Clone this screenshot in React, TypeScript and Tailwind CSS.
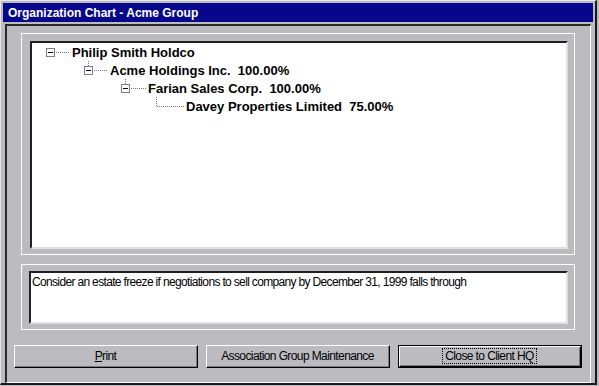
import React from 'react';

const rows = [
  { label: 'Philip Smith Holdco', pct: '', pad: 14, w: 26, box: true, up: false },
  { label: 'Acme Holdings Inc.', pct: '100.00%', pad: 52, w: 26, box: true, up: true },
  { label: 'Farian Sales Corp.', pct: '100.00%', pad: 89, w: 27, box: true, up: true },
  { label: 'Davey Properties Limited', pct: '75.00%', pad: 120, w: 34, box: false, up: true },
];

function Connector({ w, box, up }: { w: number; box: boolean; up: boolean }) {
  return (
    <svg width={w} height={18} className="shrink-0">
      {up && (
        <line x1={4.5} y1={0} x2={4.5} y2={box ? 5 : 10} stroke="#7a7a7a" strokeDasharray="1 1" />
      )}
      {box ? (
        <>
          <rect x={0.5} y={5.5} width={8} height={8} fill="#fff" stroke="#7a7a9a" />
          <line x1={2} y1={9.5} x2={7} y2={9.5} stroke="#000" />
          <line x1={10} y1={9.5} x2={w - 2} y2={9.5} stroke="#7a7a7a" strokeDasharray="1 1" />
        </>
      ) : (
        <line x1={5} y1={9.5} x2={w - 2} y2={9.5} stroke="#7a7a7a" strokeDasharray="1 1" />
      )}
    </svg>
  );
}

function Button({ label, def, u }: { label: string; def?: boolean; u?: boolean }) {
  return (
    <div className={`w-[184px] h-[23px] ${def ? 'border border-black' : ''}`}>
      <div className="w-full h-full border-t border-l border-white border-r border-b border-r-black border-b-black">
        <div className="w-full h-full border-r border-b border-[#7c7c80] flex items-center justify-center text-[12px] tracking-[-0.6px] text-black">
          {def ? (
            <span className="border border-dotted border-black px-[2px] leading-[14px]">{label}</span>
          ) : u ? (
            <span>
              <span className="underline">{label[0]}</span>
              {label.slice(1)}
            </span>
          ) : (
            <span>{label}</span>
          )}
        </div>
      </div>
    </div>
  );
}

export default function App() {
  return (
    <div className="w-[599px] h-[386px] bg-[#bcbcc0] font-['Liberation_Sans',Arial,sans-serif] overflow-hidden">
      <div className="w-[597px] h-[385px] border-t border-l border-[#e6e6e6] border-r-2 border-b-2 border-r-[#1a1a1a] border-b-[#1a1a1a] pt-[2px] px-[2px] flex flex-col">
        {/* Title */}
        <div className="h-[19px] bg-[#07078c] flex items-center pl-[5px] text-white font-bold text-[12px] leading-none">
          Organization Chart - Acme Group
        </div>

        {/* Client area */}
        <div className="mt-[2px] mx-[2px] flex-1 border-t-2 border-l-2 border-t-[#2a2a2a] border-l-[#2a2a2a] border-r border-b border-r-white border-b-white flex flex-col">
          {/* Tree group */}
          <div className="ml-[14px] mt-[7px] w-[554px] h-[222px] border border-white pl-[8px] pt-[7px]">
            <div className="w-[538px] h-[208px] border-t-2 border-l-2 border-t-[#202020] border-l-[#202020] border-r-2 border-b-2 border-r-[#e0e0e0] border-b-[#e0e0e0] bg-white">
              {rows.map((r) => (
                <div key={r.label} className="h-[18px] flex items-center" style={{ paddingLeft: r.pad }}>
                  <Connector w={r.w} box={r.box} up={r.up} />
                  <span className="font-bold text-[13px] text-black whitespace-pre leading-none">
                    {r.label}
                    {r.pct ? `  ${r.pct}` : ''}
                  </span>
                </div>
              ))}
            </div>
          </div>

          {/* Note group */}
          <div className="ml-[14px] mt-[9px] w-[554px] h-[66px] border border-white pl-[7px] pt-[6px]">
            <div className="w-[539px] h-[53px] border-t-2 border-l-2 border-t-[#202020] border-l-[#202020] border-r-2 border-b-2 border-r-[#e0e0e0] border-b-[#e0e0e0] bg-white px-[1px] pt-[2px] text-[12px] tracking-[-0.66px] text-black leading-[14px]">
              Consider an estate freeze if negotiations to sell company by December 31, 1999 falls through
            </div>
          </div>

          {/* Buttons */}
          <div className="ml-[7px] mt-[15px] flex gap-[8px]">
            <Button label="Print" u />
            <Button label="Association Group Maintenance" />
            <Button label="Close to Client HQ" def />
          </div>
        </div>
      </div>
    </div>
  );
}
